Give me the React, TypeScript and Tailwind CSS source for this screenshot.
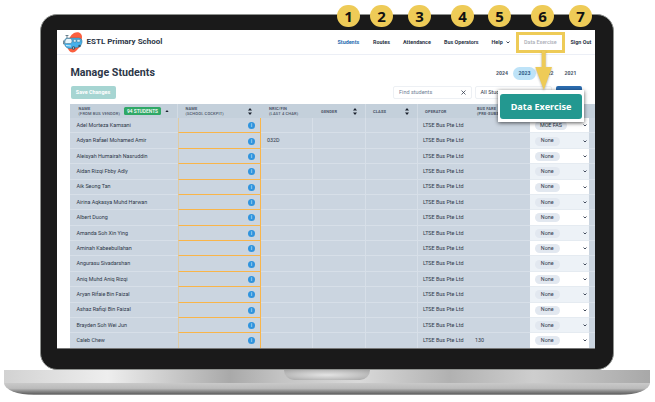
import React from "react";

type Row = { name: string; nric?: string; fare?: string; type?: string };

const rows: Row[] = [
  { name: "Adel Morteza Kamsani", type: "MOE FAS" },
  { name: "Adyan Rafael Mohamed Amir", nric: "032D" },
  { name: "Aleisyah Humairah Nasruddin" },
  { name: "Aidan Rizqi Fbby Adly" },
  { name: "Aik Seong Tan" },
  { name: "Airina Aqkasya Muhd Harwan" },
  { name: "Albert Duong" },
  { name: "Amanda Soh Xin Ying" },
  { name: "Aminah Kabeebullahan" },
  { name: "Angurasu Sivadarshan" },
  { name: "Aniq Muhd Aniq Rizqi" },
  { name: "Aryan Rifaie Bin Faizal" },
  { name: "Ashaz Rafiqi Bin Faizal" },
  { name: "Brayden Soh Wei Jun" },
  { name: "Caleb Chew", fare: "130" },
];

const steps = [
  { n: 1, pos: "left-[337px]" },
  { n: 2, pos: "left-[370px]" },
  { n: 3, pos: "left-[408px]" },
  { n: 4, pos: "left-[451px]" },
  { n: 5, pos: "left-[488px]" },
  { n: 6, pos: "left-[531px]" },
  { n: 7, pos: "left-[569px]" },
];

const columns = "grid grid-cols-[108px_83px_52px_53px_52px_53px_59px_59px_6px]";

function Chevron() {
  return (
    <svg className="h-[3px] w-[4px] shrink-0" viewBox="0 0 8 6" fill="none">
      <path d="M1 1l3 3 3-3" stroke="#2d3748" strokeWidth="1.8" />
    </svg>
  );
}

function Sorter() {
  return (
    <svg className="h-[7px] w-[4px] shrink-0" viewBox="0 0 8 14">
      <path d="M4 0l4 5H0zM4 14l4-5H0z" fill="#1a202c" />
    </svg>
  );
}

function BusLogo() {
  return (
    <svg className="h-[21px] w-[20px] shrink-0" viewBox="0 0 40 42">
      <path
        d="M22 2c7-4 16-1 16 8 0 7-3 11-4 17-1 5-5 7-8 11-3 4-11 4-14-1-3-4-3-9-2-14C11 14 15 6 22 2z"
        fill="#fb5f3f"
      />
      <path d="M8 14V6M5 7h6M3 24H1v-7" stroke="#4b6676" strokeWidth="1.5" fill="none" />
      <path
        d="M9 12h22c5 0 8 4 7 9l-2 5c-1 3-4 4-8 5l-12 2c-7 1-12-3-13-9-1-7 1-12 6-12z"
        fill="#45b0ea"
        stroke="#36718f"
        strokeWidth="1"
      />
      <path
        d="M9 13h5c3 0 4 2 4 5s-1 5-4 5H7c-3 0-4-1-3-5 1-3 2-5 5-5z"
        fill="#e9f6fc"
        stroke="#40647a"
        strokeWidth="1"
      />
      <path d="M21 15h5v5h-5zM28 15h4c2 0 3 2 2 5h-6z" fill="#d3eefa" stroke="#40647a" strokeWidth="0.8" />
      <path d="M6 27l10 1" stroke="#cdebf8" strokeWidth="2" />
      <circle cx="21" cy="32" r="3.5" fill="#36566a" />
      <circle cx="21" cy="32" r="1.300" fill="#c9dfea" />
      <circle cx="33" cy="28" r="2.500" fill="#36566a" />
    </svg>
  );
}

function NavBar() {
  return (
    <header className="flex h-[24.5px] shrink-0 items-center border-b border-[#eceff6] pl-[5.5px] pt-[1px] text-[#2d3748]">
      <BusLogo />
      <span className="ml-[4px] w-[251px] shrink-0 whitespace-nowrap text-[8px] font-bold">
        ESTL Primary School
      </span>
      <nav className="flex items-center whitespace-nowrap text-[5.4px] font-bold">
        <span className="w-[35.5px] text-[#2b6cb0]">Students</span>
        <span className="w-[30px]">Routes</span>
        <span className="w-[41px]">Attendance</span>
        <span className="w-[47.5px]">Bus Operators</span>
        <span className="flex w-[32.5px] items-center gap-[3.5px]">
          Help <Chevron />
        </span>
        <span className="w-[46.5px] font-medium text-[#a9adb5]">Data Exercise</span>
        <span>Sign Out</span>
      </nav>
    </header>
  );
}

function Toolbar() {
  return (
    <section className="h-[49.5px] shrink-0 pl-[13.5px]">
      <div className="flex h-[31px] items-center pt-[7px]">
        <h1 className="w-[418.5px] whitespace-nowrap text-[10.7px] font-bold text-[#2d3748]">
          Manage Students
        </h1>
        <div className="flex items-center text-[5.2px] font-bold text-[#4a5568]">
          <span className="w-[24px] pl-[7px]">2024</span>
          <span className="flex h-[13px] w-[23px] items-center justify-center rounded-full bg-[#bee3f8] text-[#2a5885]">
            2023
          </span>
          <span className="w-[28.5px] pl-[5.5px]">2022</span>
          <span>2021</span>
        </div>
      </div>
      <div className="flex h-[13.5px] text-[5.5px]">
        <button className="w-[45px] whitespace-nowrap rounded-[2px] bg-[#a6d5d2] text-[5.4px] font-bold text-white">
          Save Changes
        </button>
        <div className="ml-[277.5px] flex w-[78.5px] items-center justify-between rounded-[2px] border border-[#edf0f4] px-[5px] text-[#718096]">
          Find students
          <svg className="h-[5px] w-[5px]" viewBox="0 0 10 10">
            <path d="M1 1l8 8M9 1L1 9" stroke="#2d3748" strokeWidth="1.5" />
          </svg>
        </div>
        <div className="ml-[3px] flex w-[77px] items-center whitespace-nowrap rounded-[2px] border border-[#edf0f4] pl-[5px] text-[#2d3748]">
          All Students
        </div>
        <button className="ml-[4px] w-[26.5px] rounded-[2px] bg-[#2b6cb0] text-[5px] font-bold text-white">
          Export
        </button>
      </div>
    </section>
  );
}

function TableHead() {
  return (
    <div
      className={`${columns} h-[14px] shrink-0 bg-[#c4d0db] text-[4px] font-bold leading-[5px] tracking-[0.15px] whitespace-nowrap text-[#4a5568]`}
    >
      <div className="flex items-center border-r border-[#d2dbe4] pl-[8.5px]">
        <div className="w-[45.5px]">
          NAME
          <br />
          <span className="font-medium">(FROM BUS VENDOR)</span>
        </div>
        <span className="flex h-[8px] w-[37px] items-center justify-center rounded-[1.5px] bg-[#2fa866] text-[4.9px] font-medium tracking-normal text-white">
          94 STUDENTS
        </span>
        <svg className="ml-[4px] h-[2.5px] w-[4px]" viewBox="0 0 8 5">
          <path d="M4 0l4 5H0z" fill="#1a202c" />
        </svg>
      </div>
      <div className="flex items-center justify-between pl-[7.5px] pr-[9px]">
        <div>
          NAME
          <br />
          <span className="font-medium">(SCHOOL COCKPIT)</span>
        </div>
        <Sorter />
      </div>
      <div className="flex items-center pl-[8px]">
        <div>
          NRIC/FIN
          <br />
          <span className="font-medium">(LAST 4 CHAR)</span>
        </div>
      </div>
      <div className="flex items-center justify-between border-r border-[#d2dbe4] pl-[8px] pr-[8px]">
        GENDER <Sorter />
      </div>
      <div className="flex items-center justify-between border-r border-[#d2dbe4] pl-[7px] pr-[8px]">
        CLASS <Sorter />
      </div>
      <div className="flex items-center pl-[7px]">OPERATOR</div>
      <div className="flex items-center pl-[6px]">
        <div>
          BUS FARE
          <br />
          (PRE-SUBSIDY)
        </div>
      </div>
      <div />
      <div />
    </div>
  );
}

function StudentRow({ row, striped }: { row: Row; striped: boolean }) {
  const line = "flex items-center border-b border-[#d7dfe8] pt-[1px]";
  return (
    <div
      className={`${columns} h-[15.375px] shrink-0 whitespace-nowrap text-[5.4px] text-[#2d3748]`}
    >
      <div className={`${line} pl-[6.5px]`}>{row.name}</div>
      <div className="flex items-center justify-end border-b border-l border-r border-b-[#f9b54a] border-l-[#dfcba4] border-r-[#f9b54a] pr-[5px] pt-[1px]">
        <span className="flex h-[7px] w-[7px] items-center justify-center rounded-full bg-[#3094dd] text-[5px] font-bold leading-none text-[#b5def8]">
          i
        </span>
      </div>
      <div className={`${line} border-r pl-[6px]`}>{row.nric}</div>
      <div className={`${line} border-r`} />
      <div className={`${line} border-r`} />
      <div className={`${line} pl-[5px]`}>LTSE Bus Pte Ltd</div>
      <div className={`${line} pl-[4px]`}>{row.fare}</div>
      <div
        className={`flex items-center justify-between border-b border-[#e5ebf1] pl-[5px] pr-[2.5px] pt-[1px] ${striped ? "bg-[#edf2f7]" : "bg-white"}`}
      >
        <span
          className={`flex h-[9px] items-center justify-center rounded-full bg-[#e2e8f0] text-[5.4px] ${row.type ? "w-[32px]" : "w-[24.5px]"}`}
        >
          {row.type ?? "None"}
        </span>
        <Chevron />
      </div>
      <div className={line} />
    </div>
  );
}

function Laptop() {
  return (
    <div className="flex w-[646px] flex-col items-center">
      <div className="flex h-[356px] w-[574px] rounded-[17px] border border-[#8f928f] bg-[#1a1a1a] pl-[16px] pt-[15px]">
        <div className="box-content flex h-[318px] w-[538px] shrink-0 flex-col overflow-hidden border-b border-[#777] bg-white">
          <NavBar />
          <Toolbar />
          <div className="ml-[13px] flex flex-col bg-[#cbd5e0]">
            <TableHead />
            {rows.map((row, i) => (
              <StudentRow key={row.name} row={row} striped={i % 2 === 1} />
            ))}
          </div>
        </div>
      </div>
      <div className="flex h-[12.5px] w-full justify-center bg-[linear-gradient(90deg,#d2d2d2_0%,#eeeeee_16%,#a9a9a9_35%,#c4c4c4_43%,#d9d9d9_55%,#b1b1b1_69%,#cecece_82%,#a8a8a8_100%)]">
        <div className="h-[10px] w-[86px] rounded-b-[14px] bg-[radial-gradient(ellipse_at_center,#e4e4e4_0%,#c6c6c6_50%,#a4a4a4_100%)]" />
      </div>
      <div className="h-[12.5px] w-full bg-[linear-gradient(180deg,#c9c9c9_0%,#bbbbbb_45%,#888_70%,#666_90%,#aaa_100%)] [border-bottom-left-radius:30px_12px] [border-bottom-right-radius:30px_12px]" />
    </div>
  );
}

export default function App() {
  return (
    <main className="relative h-[402px] w-[655px] overflow-hidden bg-white pl-[4px] pt-[14px] font-['Roboto','Liberation_Sans',sans-serif] leading-none">
      <Laptop />

      {steps.map((s) => (
        <span
          key={s.n}
          className={`absolute top-[5px] flex h-[22px] w-[23px] items-center justify-center rounded-full bg-[#eecb57] font-['Noto_Sans','Open_Sans',sans-serif] text-[15px] font-bold text-[#111] ${s.pos}`}
        >
          {s.n}
        </span>
      ))}

      <div className="absolute left-[516px] top-[32px] h-[20.5px] w-[49px] border-[3px] border-[#eecb57]" />
      <div className="absolute left-[498px] top-[90px] flex h-[32px] w-[86px] bg-white px-[2px] pb-[3px] pt-[4px] shadow-[0_1px_4px_rgba(0,0,0,0.65)]">
        <div className="flex flex-1 items-center justify-center whitespace-nowrap rounded-[3px] bg-[#239890] font-['Noto_Sans',sans-serif] text-[9.1px] font-bold text-white">
          Data Exercise
        </div>
      </div>
      <svg
        className="absolute left-[533px] top-[51px] h-[41px] w-[22px] drop-shadow-[0_1px_1px_rgba(0,0,0,0.3)]"
        viewBox="0 0 22 41"
      >
        <path d="M8.7 0h4v16H19L10.800 39 2.300 16h6.400z" fill="#eecb57" />
      </svg>
    </main>
  );
}
